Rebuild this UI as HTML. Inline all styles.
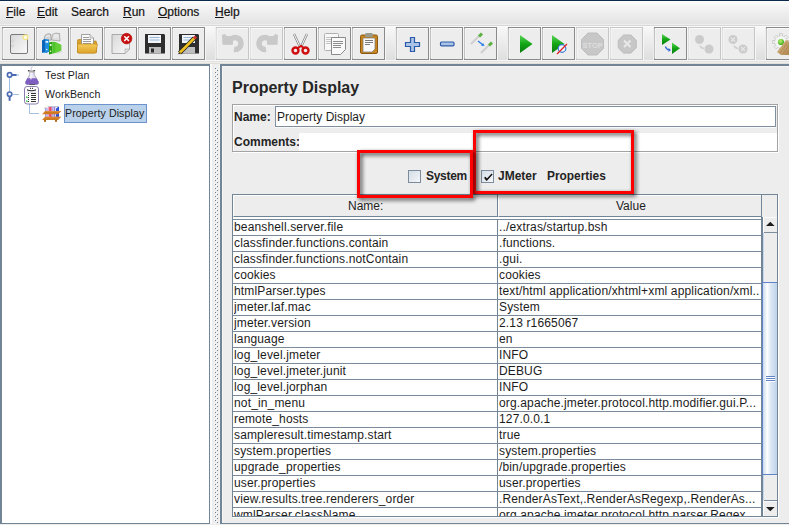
<!DOCTYPE html>
<html><head><meta charset="utf-8">
<style>
*{margin:0;padding:0;box-sizing:border-box}
html,body{width:789px;height:525px;overflow:hidden;background:#ededed;font-family:"Liberation Sans",sans-serif;color:#000}
.a{position:absolute}
#menubar{left:0;top:0;width:789px;height:27px;background:linear-gradient(#fdfdfd 0px,#f4f4f4 6px,#e3e3e3 23px,#ededed 23px,#ededed 24px,#d8d8d8 24px,#d8d8d8 25px,#fafafa 25px);border-top:1px solid #0b2a4c}
.mi{position:absolute;top:4px;font-size:12px;line-height:14px;color:#141414;-webkit-text-stroke:0.2px #141414}
.mi u{text-decoration:underline;text-decoration-thickness:1px;text-underline-offset:0.5px}
#toolbar{left:0;top:27px;width:789px;height:37px;background:linear-gradient(#ededed 33px,#f6f6f6 33px,#f6f6f6 34px,#e3e3e3 34px,#e3e3e3 35px,#eeeeee 35px,#eeeeee 36px,#e2ded9 36px)}
.btn{position:absolute;top:1px;width:33px;height:33px;border:1px solid #8e8e8e;background:#ededed;box-shadow:inset 1px 1px 0 #fafafa}
.btn.dis{border-color:#c9c9c9}
.btn svg{position:absolute;left:7px;top:7px;width:18px;height:18px}
#left{left:0;top:64px;width:210px;height:460px;background:#fff;border-left:2px solid #718597;border-top:2px solid #718597;border-right:1px solid #718597;border-bottom:1px solid #718597}
#split{left:210px;top:64px;width:10px;height:461px;background:#eeeeee}
#right{left:220px;top:64px;width:569px;height:460px;background:#ededed;border-left:2px solid #718597;border-top:2px solid #718597;border-bottom:1px solid #718597;box-shadow:inset 1px 1px 0 #f5f4f2}
.tt{position:absolute;font-size:10.6px;line-height:13px;color:#1a1a1a;white-space:nowrap}
.row{position:absolute;left:0;width:264px;height:16px;border-bottom:1px solid #7b8b9b}
.cell{position:absolute;font-size:12px;line-height:14px;white-space:nowrap;color:#1c1c1c}

#title{left:232px;top:79px;font-size:16px;font-weight:bold;line-height:18px;color:#262626}
#grp{left:232px;top:104px;width:546px;height:48px;border:1px solid #a3a3a3;box-shadow:1px 1px 0 #fff, inset 1px 1px 0 #fff}
.lbl{position:absolute;font-size:11.5px;font-weight:bold;line-height:14px;color:#242424;white-space:nowrap}
#namef{left:275px;top:106px;width:501px;height:21px;background:#fff;border:1px solid #7f8f9f;box-shadow:0 1px 0 #fafafa}
#namef span{position:absolute;left:1px;top:3px;font-size:12px;line-height:15px;color:#1e1e1e}
#comm{left:299px;top:133px;width:478px;height:18px;background:#fff}
.cb{position:absolute;top:170px;width:13px;height:13px;border:1px solid #7c8c9c;background:linear-gradient(135deg,#d3dce7,#f5f7f9)}
.rb{position:absolute;border:3px solid #f00;filter:drop-shadow(2px 2px 2px rgba(0,0,0,.75))}
#tbl{left:232px;top:194px;width:546px;height:323px;border:1px solid #718597;background:#ededed;box-shadow:1px 1px 0 #fff}
#hdr1{left:233px;top:195px;width:264px;height:22px;border-top:1px solid #fff;border-left:1px solid #fff;border-bottom:1px solid #718597}
#hdr2{left:498px;top:195px;width:263px;height:22px;border-top:1px solid #fff;border-left:1px solid #fff;border-bottom:1px solid #718597}
.hd{position:absolute;top:3px;font-size:12px;line-height:15px;color:#1e1e1e;white-space:nowrap}
#vl1{left:497px;top:195px;width:1px;height:321px;background:#718597}
#vl2{left:761px;top:195px;width:1px;height:321px;background:#718597}
#tbody{left:233px;top:219px;width:528px;height:297px;overflow:hidden;background:repeating-linear-gradient(#7b8b9b 0 1px,#fff 1px 16px);border-top:0}
#tbody .c1,#tbody .c2{position:absolute;font-size:12px;line-height:15px;color:#1c1c1c;white-space:nowrap;letter-spacing:0.15px}
#tbody .c1{left:1px;width:262px;overflow:hidden}
#tbody .c2{left:266px;width:260px;overflow:hidden}

.tree-t{position:absolute;font-size:10.6px;line-height:13px;color:#1a1a1a;white-space:nowrap;letter-spacing:0.1px}
#sel{left:64px;top:104px;width:83px;height:19px;background:#b9d1ea;border:1px solid #6d93cf}
.dotsx{left:214px;top:67px;width:5px;height:456px;background-image:radial-gradient(circle at 1.5px 1.5px,#6d7f90 0.9px,transparent 1.2px),radial-gradient(circle at 3.5px 3.5px,#6d7f90 0.9px,transparent 1.2px);background-size:4px 4px,4px 4px}
</style></head><body>
<div id="menubar" class="a">
 <span class="mi" style="left:6px"><u>F</u>ile</span>
 <span class="mi" style="left:37px"><u>E</u>dit</span>
 <span class="mi" style="left:71px">Search</span>
 <span class="mi" style="left:123px"><u>R</u>un</span>
 <span class="mi" style="left:158px"><u>O</u>ptions</span>
 <span class="mi" style="left:215px"><u>H</u>elp</span>
</div>
<div id="toolbar" class="a"></div><!--TB--><svg class="a" style="left:0;top:26px" width="789" height="38" viewBox="0 26 789 38">
<defs>
<linearGradient id="sepg" x1="0" y1="0" x2="0" y2="1"><stop offset="0" stop-color="#f8f8f8"/><stop offset="1" stop-color="#dedede"/></linearGradient>
<linearGradient id="pageg" x1="0" y1="0" x2="1" y2="1"><stop offset="0" stop-color="#d8d8d8"/><stop offset="1" stop-color="#fafafa"/></linearGradient>
<linearGradient id="foldg" x1="0" y1="0" x2="0" y2="1"><stop offset="0" stop-color="#f6cc5a"/><stop offset="1" stop-color="#dca22a"/></linearGradient>
<radialGradient id="ballg" cx="0.4" cy="0.35" r="0.7"><stop offset="0" stop-color="#b8f070"/><stop offset="1" stop-color="#38a818"/></radialGradient>
<linearGradient id="broomg" x1="0" y1="0" x2="1" y2="1"><stop offset="0" stop-color="#d8b888"/><stop offset="1" stop-color="#b08850"/></linearGradient>
<linearGradient id="greeng" x1="0" y1="0" x2="0" y2="1"><stop offset="0" stop-color="#5ed65a"/><stop offset="0.5" stop-color="#13a515"/><stop offset="1" stop-color="#0b7a10"/></linearGradient>
</defs>
<rect x="206" y="27" width="9" height="33" fill="url(#sepg)"/><rect x="386" y="27" width="9" height="33" fill="url(#sepg)"/><rect x="498" y="27" width="9" height="33" fill="url(#sepg)"/><rect x="644" y="27" width="9" height="33" fill="url(#sepg)"/><rect x="756" y="27" width="9" height="33" fill="url(#sepg)"/><rect x="2.5" y="27.5" width="32" height="32" fill="#ededed" stroke="#8a8a8a" stroke-width="1"/><path d="M3 58.5V28.5H34" stroke="#fafafa" stroke-width="1" fill="none"/><path d="M35.5 27V60.5H2" stroke="#f6f6f6" stroke-width="1" fill="none"/><rect x="36.5" y="27.5" width="32" height="32" fill="#ededed" stroke="#8a8a8a" stroke-width="1"/><path d="M37 58.5V28.5H68" stroke="#fafafa" stroke-width="1" fill="none"/><path d="M69.5 27V60.5H36" stroke="#f6f6f6" stroke-width="1" fill="none"/><rect x="70.5" y="27.5" width="32" height="32" fill="#ededed" stroke="#8a8a8a" stroke-width="1"/><path d="M71 58.5V28.5H102" stroke="#fafafa" stroke-width="1" fill="none"/><path d="M103.5 27V60.5H70" stroke="#f6f6f6" stroke-width="1" fill="none"/><rect x="104.5" y="27.5" width="32" height="32" fill="#ededed" stroke="#8a8a8a" stroke-width="1"/><path d="M105 58.5V28.5H136" stroke="#fafafa" stroke-width="1" fill="none"/><path d="M137.5 27V60.5H104" stroke="#f6f6f6" stroke-width="1" fill="none"/><rect x="138.5" y="27.5" width="32" height="32" fill="#ededed" stroke="#8a8a8a" stroke-width="1"/><path d="M139 58.5V28.5H170" stroke="#fafafa" stroke-width="1" fill="none"/><path d="M171.5 27V60.5H138" stroke="#f6f6f6" stroke-width="1" fill="none"/><rect x="172.5" y="27.5" width="32" height="32" fill="#ededed" stroke="#8a8a8a" stroke-width="1"/><path d="M173 58.5V28.5H204" stroke="#fafafa" stroke-width="1" fill="none"/><path d="M205.5 27V60.5H172" stroke="#f6f6f6" stroke-width="1" fill="none"/><rect x="216.5" y="27.5" width="32" height="32" fill="#ededed" stroke="#c6c6c6" stroke-width="1"/><path d="M217 58.5V28.5H248" stroke="#fafafa" stroke-width="1" fill="none"/><path d="M249.5 27V60.5H216" stroke="#f6f6f6" stroke-width="1" fill="none"/><rect x="250.5" y="27.5" width="32" height="32" fill="#ededed" stroke="#c6c6c6" stroke-width="1"/><path d="M251 58.5V28.5H282" stroke="#fafafa" stroke-width="1" fill="none"/><path d="M283.5 27V60.5H250" stroke="#f6f6f6" stroke-width="1" fill="none"/><rect x="284.5" y="27.5" width="32" height="32" fill="#ededed" stroke="#8a8a8a" stroke-width="1"/><path d="M285 58.5V28.5H316" stroke="#fafafa" stroke-width="1" fill="none"/><path d="M317.5 27V60.5H284" stroke="#f6f6f6" stroke-width="1" fill="none"/><rect x="318.5" y="27.5" width="32" height="32" fill="#ededed" stroke="#8a8a8a" stroke-width="1"/><path d="M319 58.5V28.5H350" stroke="#fafafa" stroke-width="1" fill="none"/><path d="M351.5 27V60.5H318" stroke="#f6f6f6" stroke-width="1" fill="none"/><rect x="352.5" y="27.5" width="32" height="32" fill="#ededed" stroke="#8a8a8a" stroke-width="1"/><path d="M353 58.5V28.5H384" stroke="#fafafa" stroke-width="1" fill="none"/><path d="M385.5 27V60.5H352" stroke="#f6f6f6" stroke-width="1" fill="none"/><rect x="396.5" y="27.5" width="32" height="32" fill="#ededed" stroke="#8a8a8a" stroke-width="1"/><path d="M397 58.5V28.5H428" stroke="#fafafa" stroke-width="1" fill="none"/><path d="M429.5 27V60.5H396" stroke="#f6f6f6" stroke-width="1" fill="none"/><rect x="430.5" y="27.5" width="32" height="32" fill="#ededed" stroke="#8a8a8a" stroke-width="1"/><path d="M431 58.5V28.5H462" stroke="#fafafa" stroke-width="1" fill="none"/><path d="M463.5 27V60.5H430" stroke="#f6f6f6" stroke-width="1" fill="none"/><rect x="464.5" y="27.5" width="32" height="32" fill="#ededed" stroke="#8a8a8a" stroke-width="1"/><path d="M465 58.5V28.5H496" stroke="#fafafa" stroke-width="1" fill="none"/><path d="M497.5 27V60.5H464" stroke="#f6f6f6" stroke-width="1" fill="none"/><rect x="508.5" y="27.5" width="32" height="32" fill="#ededed" stroke="#8a8a8a" stroke-width="1"/><path d="M509 58.5V28.5H540" stroke="#fafafa" stroke-width="1" fill="none"/><path d="M541.5 27V60.5H508" stroke="#f6f6f6" stroke-width="1" fill="none"/><rect x="542.5" y="27.5" width="32" height="32" fill="#ededed" stroke="#8a8a8a" stroke-width="1"/><path d="M543 58.5V28.5H574" stroke="#fafafa" stroke-width="1" fill="none"/><path d="M575.5 27V60.5H542" stroke="#f6f6f6" stroke-width="1" fill="none"/><rect x="576.5" y="27.5" width="32" height="32" fill="#ededed" stroke="#c6c6c6" stroke-width="1"/><path d="M577 58.5V28.5H608" stroke="#fafafa" stroke-width="1" fill="none"/><path d="M609.5 27V60.5H576" stroke="#f6f6f6" stroke-width="1" fill="none"/><rect x="610.5" y="27.5" width="32" height="32" fill="#ededed" stroke="#c6c6c6" stroke-width="1"/><path d="M611 58.5V28.5H642" stroke="#fafafa" stroke-width="1" fill="none"/><path d="M643.5 27V60.5H610" stroke="#f6f6f6" stroke-width="1" fill="none"/><rect x="654.5" y="27.5" width="32" height="32" fill="#ededed" stroke="#8a8a8a" stroke-width="1"/><path d="M655 58.5V28.5H686" stroke="#fafafa" stroke-width="1" fill="none"/><path d="M687.5 27V60.5H654" stroke="#f6f6f6" stroke-width="1" fill="none"/><rect x="688.5" y="27.5" width="32" height="32" fill="#ededed" stroke="#c6c6c6" stroke-width="1"/><path d="M689 58.5V28.5H720" stroke="#fafafa" stroke-width="1" fill="none"/><path d="M721.5 27V60.5H688" stroke="#f6f6f6" stroke-width="1" fill="none"/><rect x="722.5" y="27.5" width="32" height="32" fill="#ededed" stroke="#c6c6c6" stroke-width="1"/><path d="M723 58.5V28.5H754" stroke="#fafafa" stroke-width="1" fill="none"/><path d="M755.5 27V60.5H722" stroke="#f6f6f6" stroke-width="1" fill="none"/><rect x="766.5" y="27.5" width="32" height="32" fill="#ededed" stroke="#8a8a8a" stroke-width="1"/><path d="M767 58.5V28.5H798" stroke="#fafafa" stroke-width="1" fill="none"/><path d="M799.5 27V60.5H766" stroke="#f6f6f6" stroke-width="1" fill="none"/>

<!-- btn1 new -->
<rect x="10.5" y="34.5" width="17" height="19" rx="1.5" fill="url(#pageg)" stroke="#7a7a7a"/>
<circle cx="12.5" cy="41" r="0.9" fill="#fff" stroke="#999" stroke-width="0.4"/><circle cx="12.5" cy="45.8" r="0.9" fill="#fff" stroke="#999" stroke-width="0.4"/>
<circle cx="25.5" cy="37.3" r="2.4" fill="#fffbe8" stroke="#f2e68a" stroke-width="1.3"/>
<!-- btn2 templates -->
<path d="M43.5 41 L45 35.5 q2.5 -2.5 5.5 -1.5 L51.5 40z" fill="#d4d4d4" stroke="#8c8c8c" stroke-width="0.6"/>
<path d="M51.5 40 L52.5 34.5 q3 -2.2 7 -1 L60 41z" fill="#dedede" stroke="#8c8c8c" stroke-width="0.6"/>
<path d="M46 36.5 q2 -1.2 4 -0.6M53.5 35.5 q2.5 -1 5 -0.3M53.5 37.5 q2.5 -1 5 -0.3" stroke="#f8f8f8" stroke-width="0.8" fill="none"/>
<path d="M42 40.5 l3 -1.5 l4 0.5 l0.5 12 l-3 1.5 l-4 -0.5z" fill="#1f8ee0"/>
<path d="M42 40.5 l3 -1.5 v12.5 l-3 1.5z" fill="#0d64b8"/>
<rect x="45.6" y="41" width="2.6" height="1.8" fill="#dff0ff"/>
<circle cx="46.8" cy="49.5" r="0.7" fill="#fff"/>
<path d="M49 42.5 l3.2 -0.8 v12 l-3.2 0.8z" fill="#2a9c12"/>
<path d="M52.2 41.7 l3 0.3 l6 3 v5.5 l-6 2.5 l-3 0.7z" fill="#4cc22a"/>
<path d="M55.2 42 l6 3 v5.5 l-6 2.5z" fill="#62cf36"/>
<rect x="49.8" y="44" width="1.7" height="2" fill="#e8ffe0"/>
<circle cx="50.6" cy="51.3" r="0.7" fill="#fff"/>
<path d="M57 53.5 l5 -2" stroke="#bdbdbd" stroke-width="1" opacity="0.6"/>
<!-- btn3 open -->
<path d="M77.5 40.5 q0 -1 1 -1 h4 l1 1.5 h12 q1 0 1 1 v10.5 h-19z" fill="#d9a02a" stroke="#b07a10" stroke-width="0.6"/>
<path d="M81.5 34.5 h8.5 l3.5 3.5 v8 h-12z" fill="#fbfbfb" stroke="#8a8a8a" stroke-width="0.8"/>
<path d="M90 34.5 v3.5 h3.5" stroke="#8a8a8a" stroke-width="0.6" fill="#e8e8e8"/>
<path d="M83 37.5h6M83 39.5h8M83 41.5h8M83 43.5h8" stroke="#9c9c9c" stroke-width="1"/>
<path d="M77.5 44 h20 l-1.5 8.5 q-0.3 0.8 -1.2 0.8 h-16 q-1 0 -1.3 -0.8z" fill="url(#foldg)" stroke="#b88316" stroke-width="0.6"/>
<!-- btn4 close -->
<path d="M112 34.5 h12 l5.5 5.5 v9 l-4.5 4.5 h-13z" fill="url(#pageg)" stroke="#9a9a9a" stroke-width="0.8"/>
<path d="M125 53.5 l4.5 -4.5 h-4.5z" fill="#e8e8e8" stroke="#9a9a9a" stroke-width="0.6"/>
<circle cx="126.6" cy="38.6" r="5.3" fill="#c81010" stroke="#a00" stroke-width="0.6"/>
<path d="M124.3 36.3l4.6 4.6M128.9 36.3l-4.6 4.6" stroke="#fff" stroke-width="1.5"/>
<!-- btn5 save -->
<path d="M145 34 h19 l1 1 v18.5 h-20z" fill="#2e2e2e"/>
<rect x="148" y="35" width="13" height="8" fill="#f2f6fa"/>
<path d="M149.5 37.5h10M149.5 40h10" stroke="#8fb0d0" stroke-width="0.9"/>
<rect x="149" y="47" width="12" height="6.5" fill="#bdbdbd"/>
<rect x="151" y="48.5" width="3" height="4" fill="#2e2e2e"/>
<!-- btn6 save as -->
<path d="M179 34 h19 l1 1 v18.5 h-20z" fill="#2e2e2e"/>
<rect x="182" y="35" width="13" height="8" fill="#f2f6fa"/>
<path d="M183.5 37.5h10M183.5 40h10" stroke="#8fb0d0" stroke-width="0.9"/>
<rect x="183" y="47" width="12" height="6.5" fill="#bdbdbd"/>
<path d="M179.5 53 l15 -15" stroke="#222" stroke-width="4.2"/>
<path d="M179.5 53 l15 -15" stroke="#f0c020" stroke-width="2.6"/>
<path d="M194 38.5 l2 -2" stroke="#d03030" stroke-width="3"/>
<path d="M178.5 54.2 l1.8 -1.8" stroke="#333" stroke-width="1.2"/>
<!-- btn7 undo disabled -->
<g id="undoic">
<path d="M231.5 38.6 A6 6 0 1 1 234 49.4" stroke="#c9c9c9" stroke-width="5.4" fill="none"/>
<path d="M222.5 35.2 L224.6 34.5 L227 36.6 L232.5 36.6 L232.5 44.3 L223 44.3 Z" fill="#c9c9c9" stroke="#c9c9c9" stroke-width="1" stroke-linejoin="round"/>
</g>
<!-- btn8 redo disabled -->
<use href="#undoic" transform="translate(500,0) scale(-1,1)"/>
<!-- btn9 cut -->
<path d="M294 34 l6 13 M307 34 l-6 13" stroke="#8a8a8a" stroke-width="2.4"/>
<path d="M294 34 l6 13 M307 34 l-6 13" stroke="#f4f4f4" stroke-width="1"/>
<circle cx="295.5" cy="50.5" r="3" fill="none" stroke="#d01010" stroke-width="2.4"/>
<circle cx="305.5" cy="50.5" r="3" fill="none" stroke="#d01010" stroke-width="2.4"/>
<path d="M298 48 l3 -2 l3 2" stroke="#d01010" stroke-width="2" fill="none"/>
<!-- btn10 copy -->
<rect x="324.5" y="33.5" width="14" height="17" rx="1" fill="#f8f8f8" stroke="#b0b0b0"/>
<path d="M326 37.5h8M326 39.5h8M326 41.5h5M326 43.5h5" stroke="#c4c4c4" stroke-width="1"/>
<path d="M331.5 37.5 h14 v12 l-5 5 h-9z" fill="#fafafa" stroke="#8a8a8a"/>
<path d="M333 41.5h10M333 43.5h10M333 45.5h8M333 47.5h8" stroke="#8e8e8e" stroke-width="1"/>
<!-- btn11 paste -->
<rect x="360.5" y="35" width="17" height="18.5" rx="1.5" fill="#c9851f" stroke="#8a5a10"/>
<path d="M363 38 h12 v11 l-3 3 h-9z" fill="#fafafa" stroke="#777" stroke-width="0.7"/>
<path d="M365 40.5h8M365 42.5h8M365 44.5h5" stroke="#7a7a7a" stroke-width="1"/>
<rect x="365" y="33" width="8" height="4" rx="1.5" fill="#9a9a8a"/>
<!-- btn12 plus -->
<path d="M410.5 37.5 h4 v5 h5 v4 h-5 v5 h-4 v-5 h-5 v-4 h5z" fill="#a9c4e6" stroke="#2c5aa8" stroke-width="1.2"/>
<!-- btn13 minus -->
<rect x="440.5" y="42" width="13.5" height="3.8" rx="1" fill="#a9c4e6" stroke="#2c5aa8" stroke-width="1.2"/>
<!-- btn14 toggle -->
<path d="M471 44 l8 -8" stroke="#cfcfcf" stroke-width="2.2"/>
<path d="M479 36.5 l3 -3" stroke="#5cb040" stroke-width="3"/>
<path d="M481 53 l8 -8" stroke="#cfcfcf" stroke-width="2.2"/>
<path d="M489 45.5 l3 -3" stroke="#5cb040" stroke-width="3"/>
<path d="M478 41 l5 4" stroke="#2a7ee8" stroke-width="1.4"/>
<path d="M484.5 46 l-3.5 -0.2 l2.2 -2.8z" fill="#2a7ee8"/>
<!-- btn15 start -->
<path d="M520 35 L532.5 44 L520 53z" fill="url(#greeng)"/>
<!-- btn16 start no pause -->
<path d="M552 35 L564.5 44 L552 53z" fill="url(#greeng)"/>
<circle cx="562" cy="48.5" r="3.8" fill="#eef4fb" stroke="#3a7ad8" stroke-width="1.2"/>
<path d="M557 54 l10 -10" stroke="#e02020" stroke-width="1.2"/>
<!-- btn17 stop disabled -->
<path d="M588 33 h9 l6.5 6.5 v9 l-6.5 6.5 h-9 l-6.5 -6.5 v-9z" fill="#c7c7c7" stroke="#bdbdbd"/>
<text x="592.6" y="47.5" font-family="Liberation Sans" font-weight="bold" font-size="7.5" fill="#dedede" text-anchor="middle">STOP</text>
<!-- btn18 shutdown disabled -->
<path d="M623.5 35 h7.5 l5.3 5.3 v7.5 l-5.3 5.3 h-7.5 l-5.3 -5.3 v-7.5z" fill="#c7c7c7" stroke="#bdbdbd"/>
<path d="M624 40.5l6.5 6.5M630.5 40.5l-6.5 6.5" stroke="#e8e8e8" stroke-width="2.2"/>
<!-- btn19 remote start -->
<path d="M662 34 L670.5 39.5 L662 45z" fill="url(#greeng)"/>
<path d="M672 42.5 L680 48.2 L672 54z" fill="url(#greeng)"/>
<path d="M665.5 46.5 q0.5 3 4 3.5" stroke="#3a6ed0" stroke-width="1.5" fill="none"/>
<path d="M671 50 l-2.5 -2 v4z" fill="#3a6ed0"/>
<!-- btn20 remote stop disabled -->
<circle cx="699.5" cy="39.5" r="4.5" fill="#cbcbcb"/>
<circle cx="709" cy="49" r="4.5" fill="#cbcbcb"/>
<path d="M700 45.5 q0.5 2.5 4 3" stroke="#cfcfcf" stroke-width="1.4" fill="none"/>
<!-- btn21 remote shutdown disabled -->
<circle cx="733" cy="39.5" r="4.5" fill="#cbcbcb"/>
<path d="M731 37.5l4 4M735 37.5l-4 4" stroke="#e6e6e6" stroke-width="1.3"/>
<circle cx="743" cy="49" r="4.5" fill="#cbcbcb"/>
<path d="M741 47l4 4M745 47l-4 4" stroke="#e6e6e6" stroke-width="1.3"/>
<path d="M734 45.5 q0.5 2.5 4 3" stroke="#cfcfcf" stroke-width="1.4" fill="none"/>
<!-- btn22 clear all (partial) -->
<rect x="779.4" y="33.8" width="3.2" height="3" fill="#f2f2f2" stroke="#b4b4b4" stroke-width="0.6" transform="rotate(0 781 42)"/><rect x="779.4" y="33.8" width="3.2" height="3" fill="#f2f2f2" stroke="#b4b4b4" stroke-width="0.6" transform="rotate(45 781 42)"/><rect x="779.4" y="33.8" width="3.2" height="3" fill="#f2f2f2" stroke="#b4b4b4" stroke-width="0.6" transform="rotate(90 781 42)"/><rect x="779.4" y="33.8" width="3.2" height="3" fill="#f2f2f2" stroke="#b4b4b4" stroke-width="0.6" transform="rotate(135 781 42)"/><rect x="779.4" y="33.8" width="3.2" height="3" fill="#f2f2f2" stroke="#b4b4b4" stroke-width="0.6" transform="rotate(180 781 42)"/><rect x="779.4" y="33.8" width="3.2" height="3" fill="#f2f2f2" stroke="#b4b4b4" stroke-width="0.6" transform="rotate(225 781 42)"/><rect x="779.4" y="33.8" width="3.2" height="3" fill="#f2f2f2" stroke="#b4b4b4" stroke-width="0.6" transform="rotate(270 781 42)"/><rect x="779.4" y="33.8" width="3.2" height="3" fill="#f2f2f2" stroke="#b4b4b4" stroke-width="0.6" transform="rotate(315 781 42)"/>
<circle cx="781" cy="42" r="6" fill="#f4f4f4" stroke="#b8b8b8" stroke-width="0.7"/>
<circle cx="781" cy="42" r="6" fill="#f4f4f4"/>
<circle cx="781" cy="42" r="3.1" fill="url(#ballg)"/>
<path d="M777 52 L786 40 L790 42 L790 55 L781 55z" fill="url(#broomg)"/>
<path d="M780 53 l7 -10M783 54 l6 -9M786 54.5 l4 -6" stroke="#a8804c" stroke-width="0.7"/>

</svg><!--/TB-->
<div id="left" class="a"></div>
<div id="split" class="a"></div>
<div id="right" class="a"></div>
<div id="sel" class="a"></div>
<div class="tree-t" style="left:45px;top:69px">Test Plan</div>
<div class="tree-t" style="left:45px;top:88px">WorkBench</div>
<div class="tree-t" style="left:65px;top:107px">Property Display</div>
<svg class="a" style="left:0;top:64px" width="70" height="60" viewBox="0 64 70 60">
 <!-- tree lines -->
 <line x1="9.5" y1="77" x2="9.5" y2="92" stroke="#9fbde0" stroke-width="1"/>
 <line x1="13" y1="75" x2="19" y2="75" stroke="#9fbde0" stroke-width="1"/>
 <line x1="13" y1="94.5" x2="19" y2="94.5" stroke="#9fbde0" stroke-width="1"/>
 <path d="M29.5 104 V113.5 H39" stroke="#a6c0de" stroke-width="1" fill="none"/>
 <!-- key 1 -->
 <circle cx="9.6" cy="74.9" r="2.2" stroke="#4a6bb3" stroke-width="1.7" fill="#fff"/>
 <rect x="11.5" y="74" width="5" height="2" fill="#4a6bb3"/>
 <!-- key 2 -->
 <circle cx="9.6" cy="94.2" r="2.2" stroke="#4a6bb3" stroke-width="1.7" fill="#fff"/>
 <rect x="8.6" y="96.3" width="2" height="4.5" fill="#4a6bb3"/>
 <!-- flask -->
 <path d="M31.5 70 q-1 -2 1.2 -4" stroke="#dcd8ea" stroke-width="1.3" fill="none"/>
 <path d="M29.8 72 v2.5 L25.6 82 q-0.6 2.4 1.6 2.4 h9.6 q2.2 0 1.6 -2.4 L34.2 74.5 v-2.5 z" fill="#e6e2f2" stroke="#8f8f9f" stroke-width="0.7"/>
 <path d="M27.4 78.2 h9.2 l1.9 3.6 q0.5 2.5 -1.8 2.6 h-9.4 q-2.3 -0.1 -1.8 -2.6 z" fill="#7e5ec2"/>
 <rect x="27.8" y="70" width="7.4" height="1.6" rx="0.8" fill="#3e3e3e"/>
 <rect x="29.4" y="70.3" width="4.2" height="1" fill="#fafafa"/>
 <path d="M29.5 84.5 h5.5" stroke="#555" stroke-width="1"/>
 <line x1="31" y1="72.5" x2="31" y2="79.5" stroke="#fff" stroke-width="1"/>
<!-- clipboard -->
 <rect x="24.5" y="86.5" width="14" height="17.5" rx="2.6" stroke="#8a7cab" stroke-width="1" fill="#fff"/>
 <path d="M27 89.2 q4.5 2.2 9 0 v1.4 q-4.5 1.6 -9 0 z" fill="#2e2e2e"/>
 <rect x="30" y="87.8" width="1.1" height="1.1" fill="#333"/><rect x="32" y="87.8" width="1.1" height="1.1" fill="#333"/>
 <rect x="26.5" y="91.5" width="10" height="1.2" fill="#e2e0ec"/>
 <path d="M31 93.5h5M31 95.5h5M31 97.5h5M31 99.5h5M31 101.5h5" stroke="#333" stroke-width="1"/>
 <path d="M28 93.5h1M28 95.5h1M28 97.5h1M28 99.5h1M28 101.5h1" stroke="#333" stroke-width="1"/>
 <path d="M26.2 96.6 l1.3 1.3 M26.2 100.6 l1.3 1.3" stroke="#22b522" stroke-width="1.3"/>
<!-- rack -->
 <rect x="44.2" y="107.6" width="3.4" height="1" fill="#b4b0c4"/>
 <rect x="47.6" y="106" width="11.5" height="1" fill="#c4c2d0"/>
 <rect x="45" y="108.5" width="2.6" height="11" fill="#9c90e2"/>
 <rect x="45.9" y="108.5" width="0.7" height="11" fill="#dcd8ff"/>
 <rect x="48.6" y="107" width="3" height="12.5" fill="#e0305c"/>
 <rect x="49.6" y="107" width="0.7" height="12.5" fill="#f090a8"/>
 <rect x="52.3" y="107" width="3" height="12.5" fill="#9486dc"/>
 <rect x="53.2" y="107" width="0.7" height="12.5" fill="#d8d0f8"/>
 <path d="M56 108.5 l2 -1.5 h1 v10 l-3 1z" fill="#2a52d8"/>
 <path d="M42 114.2 L45.2 111 H61.3 L58.1 114.2 Z" fill="#cf7a20"/>
 <path d="M43 113.6 L45.4 111.4 H60.5" stroke="#e6a050" stroke-width="0.6" fill="none"/>
 <path d="M42 120 L45.2 116.8 H61.3 L58.1 120 Z" fill="#cf7a20"/>
 <path d="M43 119.4 L45.4 117.2 H60.5" stroke="#e6a050" stroke-width="0.6" fill="none"/>
 <rect x="44" y="120" width="2" height="1.8" fill="#b06818"/>
 <rect x="55" y="120" width="2" height="1.8" fill="#b06818"/>
</svg>
<svg class="a" style="left:210px;top:64px" width="10" height="460"><defs><pattern id="dp" x="0" y="0" width="10" height="4" patternUnits="userSpaceOnUse"><rect x="4" y="3" width="1" height="1" fill="#fbfbfb"/><rect x="5" y="0" width="1" height="1" fill="#6e8091"/><rect x="6" y="1" width="1" height="1" fill="#fbfbfb"/><rect x="7" y="2" width="1" height="1" fill="#6e8091"/></pattern></defs><rect x="0" y="0" width="2" height="460" fill="#fbfbfb"/><rect x="9" y="0" width="1" height="460" fill="#f4f4f4"/><rect x="0" y="4" width="10" height="456" fill="url(#dp)"/></svg>


<div id="title" class="a">Property Display</div>
<div id="grp" class="a"></div>
<div class="lbl" style="left:234px;top:110px;font-size:12px">Name:</div>
<div id="namef" class="a"><span>Property Display</span></div>
<div class="lbl" style="left:234px;top:135px;font-size:12px">Comments:</div>
<div id="comm" class="a"></div>
<div class="cb" style="left:408px"></div>
<div class="lbl" style="left:426px;top:169px;font-size:12px;letter-spacing:-0.3px">System</div>
<div class="cb" style="left:481px"><svg width="11" height="11" style="position:absolute;left:0;top:0"><path d="M2 6.8 L3.6 5.8 L4.9 7.6 L9.6 2.6 L10.6 3.4 L5 9.8 L4.2 9.8 Z" fill="#111"/></svg></div>
<div class="lbl" style="left:498px;top:169px;font-size:12px">JMeter</div>
<div class="lbl" style="left:547px;top:169px;font-size:11.9px">Properties</div>
<div id="tbl" class="a"></div>
<div id="hdr1" class="a"><span class="hd" style="left:114px">Name:</span></div>
<div id="hdr2" class="a"><span class="hd" style="left:117px">Value</span></div>
<div id="tbody" class="a">
<div style="position:absolute;left:264px;top:0;width:1px;height:297px;background:#718597"></div>
<div class="c1" style="top:1px">beanshell.server.file</div><div class="c2" style="top:1px">../extras/startup.bsh</div>
<div class="c1" style="top:17px">classfinder.functions.contain</div><div class="c2" style="top:17px">.functions.</div>
<div class="c1" style="top:33px">classfinder.functions.notContain</div><div class="c2" style="top:33px">.gui.</div>
<div class="c1" style="top:49px">cookies</div><div class="c2" style="top:49px">cookies</div>
<div class="c1" style="top:65px">htmlParser.types</div><div class="c2" style="top:65px">text/html application/xhtml+xml application/xml...</div>
<div class="c1" style="top:81px">jmeter.laf.mac</div><div class="c2" style="top:81px">System</div>
<div class="c1" style="top:97px">jmeter.version</div><div class="c2" style="top:97px">2.13 r1665067</div>
<div class="c1" style="top:113px">language</div><div class="c2" style="top:113px">en</div>
<div class="c1" style="top:129px">log_level.jmeter</div><div class="c2" style="top:129px">INFO</div>
<div class="c1" style="top:145px">log_level.jmeter.junit</div><div class="c2" style="top:145px">DEBUG</div>
<div class="c1" style="top:161px">log_level.jorphan</div><div class="c2" style="top:161px">INFO</div>
<div class="c1" style="top:177px">not_in_menu</div><div class="c2" style="top:177px">org.apache.jmeter.protocol.http.modifier.gui.P...</div>
<div class="c1" style="top:193px">remote_hosts</div><div class="c2" style="top:193px">127.0.0.1</div>
<div class="c1" style="top:209px">sampleresult.timestamp.start</div><div class="c2" style="top:209px">true</div>
<div class="c1" style="top:225px">system.properties</div><div class="c2" style="top:225px">system.properties</div>
<div class="c1" style="top:241px">upgrade_properties</div><div class="c2" style="top:241px">/bin/upgrade.properties</div>
<div class="c1" style="top:257px">user.properties</div><div class="c2" style="top:257px">user.properties</div>
<div class="c1" style="top:273px">view.results.tree.renderers_order</div><div class="c2" style="top:273px">.RenderAsText,.RenderAsRegexp,.RenderAs...</div>
<div class="c1" style="top:289px">wmlParser.className</div><div class="c2" style="top:289px">org.apache.jmeter.protocol.http.parser.Regex...</div>
</div>
<div id="vl1" class="a"></div>
<div id="vl2" class="a"></div>
<svg class="a" style="left:760px;top:215px" width="20" height="304" viewBox="760 215 20 304">
<rect x="761" y="217" width="2" height="299" fill="#718597"/>
<rect x="763" y="233" width="14" height="267" fill="#ededed"/>
<rect x="763" y="233" width="1" height="267" fill="#c7d8ee"/>
<rect x="763" y="217" width="14" height="15" fill="#ededed"/>
<rect x="763" y="217" width="14" height="1" fill="#fbfbfb"/>
<rect x="763" y="217" width="1" height="15" fill="#fbfbfb"/>
<rect x="764" y="232" width="13" height="1" fill="#7b8d9e"/>
<path d="M766 226 H774.6 L770.3 221.7 Z" fill="#1c1c1c"/>
<rect x="764" y="500" width="13" height="1" fill="#7b8d9e"/>
<rect x="763" y="501" width="14" height="15" fill="#ededed"/>
<rect x="763" y="501" width="14" height="1" fill="#fbfbfb"/>
<rect x="763" y="501" width="1" height="15" fill="#fbfbfb"/>
<path d="M766 507 H774.6 L770.3 511.3 Z" fill="#1c1c1c"/>
<defs><linearGradient id="thg" x1="0" y1="0" x2="1" y2="0"><stop offset="0" stop-color="#c9d9ee"/><stop offset="0.3" stop-color="#ffffff"/><stop offset="0.55" stop-color="#dce7f4"/><stop offset="1" stop-color="#bfd3ea"/></linearGradient></defs>
<rect x="762" y="282" width="15" height="193" fill="#5f84c8"/>
<rect x="763" y="283" width="14" height="191" fill="url(#thg)"/>
<path d="M766 377.5h9M766 379.5h9M766 381.5h9" stroke="#fff" stroke-width="1"/><path d="M766 376.5h9M766 378.5h9M766 380.5h9" stroke="#5f84c8" stroke-width="1"/>
<rect x="777" y="194" width="1" height="323" fill="#718597"/>
</svg>
<div class="a" style="left:233px;top:217px;width:528px;height:2px;background:#fff"></div>
<div class="rb" style="left:473px;top:130px;width:161px;height:64px"></div>
<div class="rb" style="left:357px;top:150px;width:116px;height:48px"></div>
</body></html>
